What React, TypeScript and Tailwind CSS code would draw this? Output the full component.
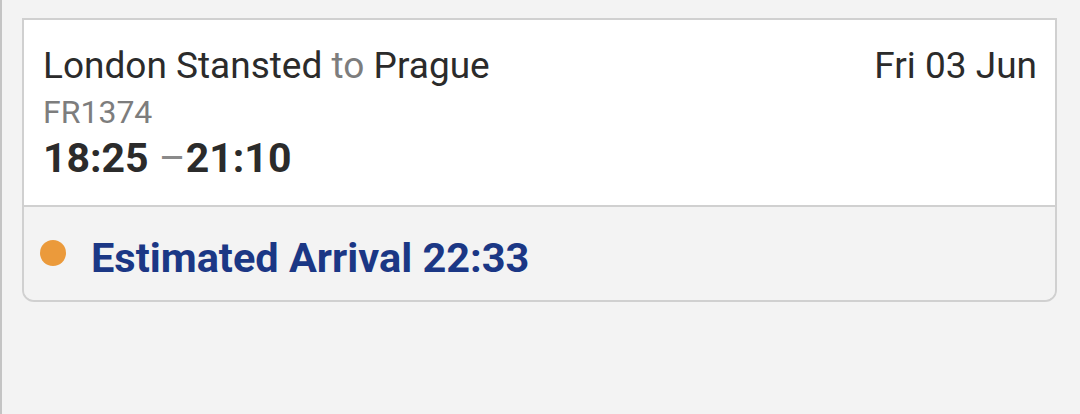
export default function App() {
    const flight = {
        from: 'London Stansted',
        to: 'Prague',
        date: 'Fri 03 Jun',
        number: 'FR1374',
        departs: '18:25',
        arrives: '21:10',
        estimated: '22:33',
    };

    return (
        <div className="h-[414px] w-[1080px] overflow-hidden border-l-2 border-[#c4c4c4] bg-[#f3f3f3] pt-[18px] pl-[20px] pr-[23px] font-['Roboto',sans-serif]">
            <div className="overflow-hidden rounded-b-[12px] border-2 border-[#d0d0d0]">
                {/* Flight details */}
                <div className="bg-white pl-[19px] pr-[18px] pt-[24px] pb-[23px]">
                    <div className="flex items-baseline justify-between text-[37px] leading-[44px] text-[#2b2b2b]">
                        <div>
                            {flight.from} <span className="text-[#7d7d7d]">to</span> {flight.to}
                        </div>
                        <div>{flight.date}</div>
                    </div>
                    <div className="mt-[6px] text-[32px] leading-[36px] text-[#7d7d7d]">{flight.number}</div>
                    <div className="mt-[4px] text-[41px] leading-[48px] font-bold text-[#2b2b2b]">
                        {flight.departs} <span className="font-normal text-[#8a8a8a]">–</span>{flight.arrives}
                    </div>
                </div>

                {/* Status */}
                <div className="flex items-start gap-[25px] border-t-2 border-[#d0d0d0] bg-[#f3f3f3] pl-[16px] pt-[27px] pb-[18px]">
                    <span className="mt-[6px] h-[26px] w-[26px] shrink-0 rounded-full bg-[#eb9a3b]" />
                    <span className="text-[41.5px] leading-[48px] font-bold text-[#1b3785]">
                        Estimated Arrival {flight.estimated}
                    </span>
                </div>
            </div>
        </div>
    );
}
